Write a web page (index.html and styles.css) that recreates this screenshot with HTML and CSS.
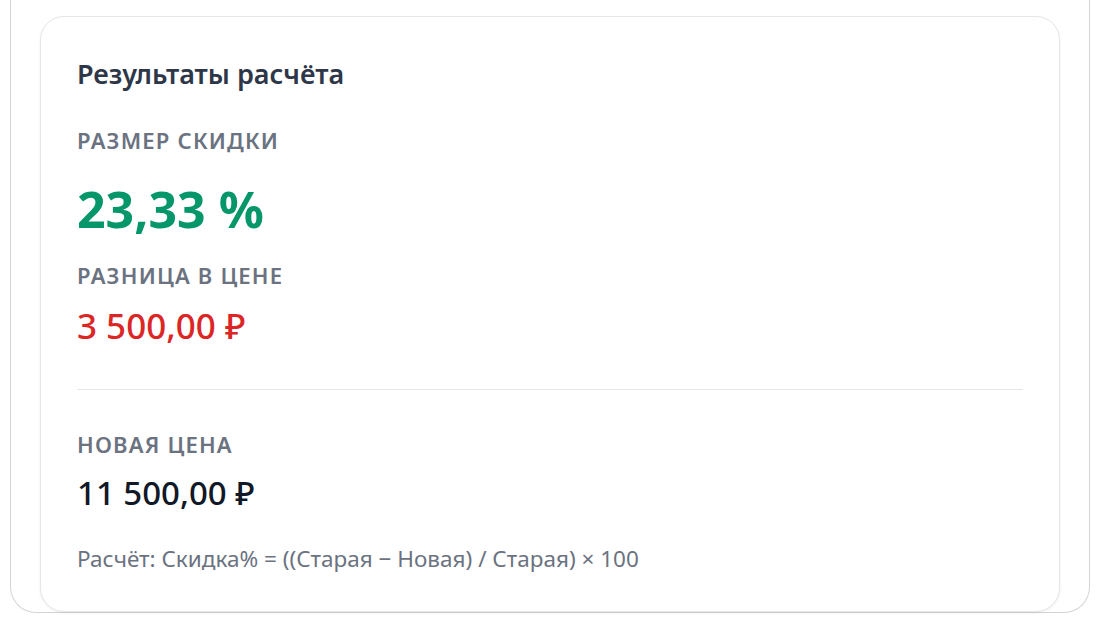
FILE: index.html
```html
<!DOCTYPE html>
<html lang="ru">
<head>
<meta charset="utf-8">
<title>Результаты расчёта</title>
<link rel="stylesheet" href="styles.css">
</head>
<body>
<div class="shell">
  <section class="card">
    <h2 class="title">Результаты расчёта</h2>
    <div class="label label-1">Размер скидки</div>
    <div class="big">23,33 %</div>
    <div class="label label-2">Разница в цене</div>
    <div class="diff">3 500,00 ₽</div>
    <hr class="divider">
    <div class="label label-3">Новая цена</div>
    <div class="price">11 500,00 ₽</div>
    <p class="formula">Расчёт: Скидка% = ((Старая − Новая) / Старая) × 100</p>
  </section>
</div>
</body>
</html>
```

FILE: styles.css
```css
* { box-sizing: border-box; }
html, body { margin: 0; padding: 0; background: #ffffff; }
body {
  font-family: "Noto Sans", "Open Sans", sans-serif;
  height: 625px;
  overflow: hidden;
}
.shell {
  margin: 0 10px;
  height: 613px;
  border: 1px solid #d4d4d4;
  border-top: none;
  border-radius: 0 0 26px 26px;
  padding: 16px 29px 0;
}
.card {
  height: 596px;
  border: 1px solid #e6e6e6;
  border-radius: 24px;
  background: #fff;
  box-shadow: 0 1px 3px rgba(0,0,0,0.06);
  padding: 39px 36px 0;
}
.title {
  margin: 0;
  font-size: 27px;
  font-weight: 600;
  color: #2d3748;
  line-height: 36px;
}
.label {
  font-size: 22px;
  font-weight: 600;
  letter-spacing: 1.2px;
  text-transform: uppercase;
  color: #6b7280;
  line-height: 30px;
}
.label-1 { margin-top: 33px; }
.label-2 { margin-top: 21px; }
.label-3 { margin-top: 39px; }
.big {
  margin-top: 24px;
  font-size: 50px;
  font-weight: 700;
  color: #059669;
  line-height: 60px;
}
.diff {
  margin-top: 13px;
  font-size: 35px;
  font-weight: 500;
  color: #dc2626;
  line-height: 46px;
}
.divider {
  border: none;
  border-top: 1px solid #e5e7eb;
  margin: 40px 0 0;
}
.price {
  margin-top: 11px;
  font-size: 33px;
  font-weight: 500;
  color: #111827;
  line-height: 46px;
}
.formula {
  margin: 28px 0 0;
  font-size: 22.5px;
  color: #6b7280;
  line-height: 30px;
}
```
